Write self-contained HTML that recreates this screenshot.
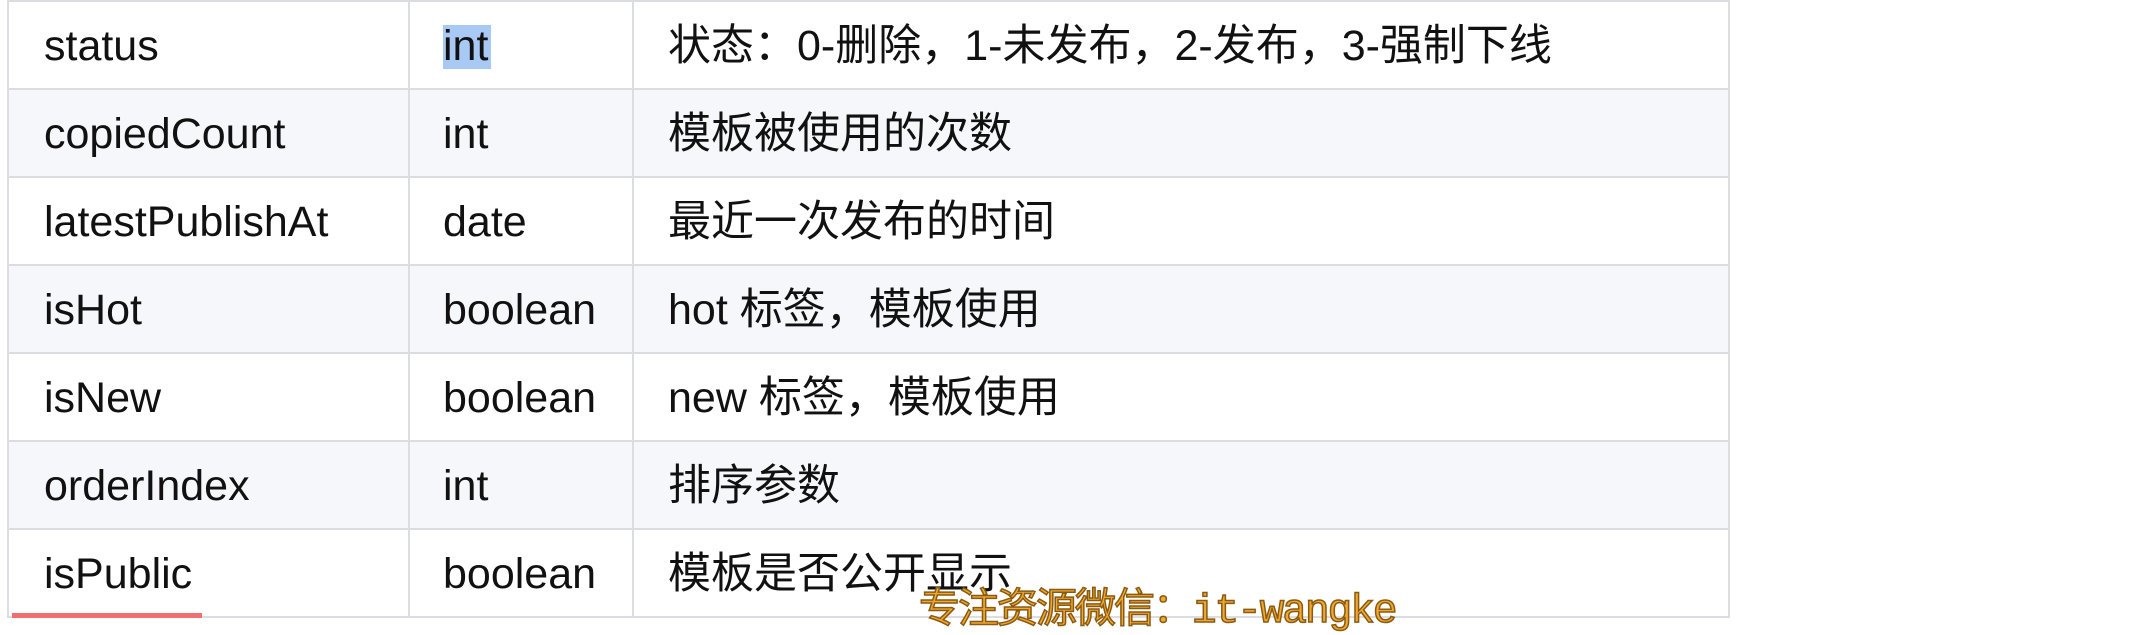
<!DOCTYPE html>
<html><head><meta charset="utf-8"><style>
body{margin:0;width:2138px;height:618px;background:#fff;overflow:hidden;position:relative;font-family:"Liberation Sans","Noto Sans CJK SC",sans-serif;color:#111;}
.row{position:absolute;left:7px;width:1722px;height:88px;border-top:2px solid #dcdde0;box-sizing:border-box;}
.s{background:#f6f7fa;}
.c{position:absolute;top:0;height:86px;line-height:88px;font-size:43px;white-space:nowrap;}
.c1{left:37px}.c2{left:436px}.c3{left:661px}
.v{position:absolute;top:0;width:2px;height:618px;background:#dcdde0;}
.wm{position:absolute;left:919px;top:574px;font-family:"Liberation Mono","Noto Sans CJK SC",monospace;font-size:41px;color:#f0a830;-webkit-text-stroke:1.5px #8a5a10;letter-spacing:-2px;white-space:nowrap;}
</style></head><body>
<div class="row" style="top:0px"><div style="position:absolute;left:436px;top:23px;width:48px;height:44px;background:#a9c9f5"></div><div class="c c1">status</div><div class="c c2">int</div><div class="c c3">状态：0-删除，1-未发布，2-发布，3-强制下线</div></div>
<div class="row s" style="top:88px"><div class="c c1">copiedCount</div><div class="c c2">int</div><div class="c c3">模板被使用的次数</div></div>
<div class="row" style="top:176px"><div class="c c1">latestPublishAt</div><div class="c c2">date</div><div class="c c3">最近一次发布的时间</div></div>
<div class="row s" style="top:264px"><div class="c c1">isHot</div><div class="c c2">boolean</div><div class="c c3">hot 标签，模板使用</div></div>
<div class="row" style="top:352px"><div class="c c1">isNew</div><div class="c c2">boolean</div><div class="c c3">new 标签，模板使用</div></div>
<div class="row s" style="top:440px"><div class="c c1">orderIndex</div><div class="c c2">int</div><div class="c c3">排序参数</div></div>
<div class="row" style="top:528px;border-bottom:2px solid #dcdde0;height:90px"><div class="c c1">isPublic</div><div class="c c2">boolean</div><div class="c c3">模板是否公开显示</div></div>
<div class="v" style="left:7px"></div>
<div class="v" style="left:408px"></div>
<div class="v" style="left:632px"></div>
<div class="v" style="left:1728px"></div>
<div style="position:absolute;left:12px;top:613px;width:190px;height:5px;background:#f07070"></div>
<div class="wm">专注资源微信：it-wangke</div>
</body></html>
